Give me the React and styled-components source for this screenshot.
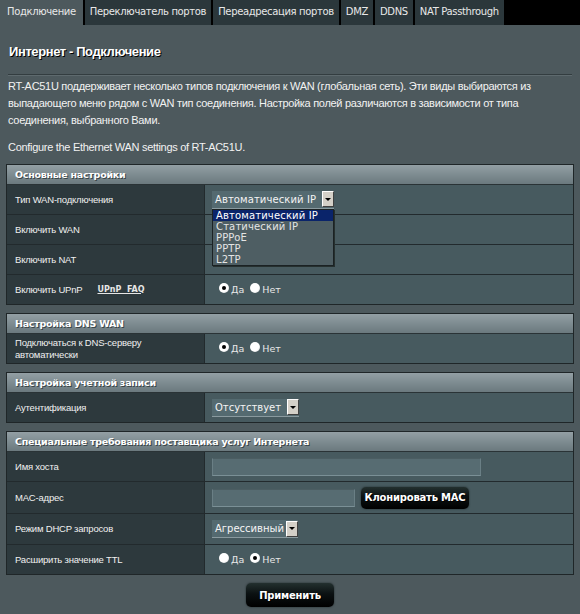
import React from "react";
import styled, { createGlobalStyle } from "styled-components";

const GlobalStyle = createGlobalStyle`
   html, body {
      margin: 0;
      padding: 0;
      background: #4d595d;
   }
   body {
      width: 580px;
      height: 614px;
      overflow: hidden;
      font-family: "Liberation Sans", Arial, sans-serif;
      color: #fff;
   }
`;

const TabBar = styled("div")`
   display: flex;
   height: 25px;
   background-color: #000;
`;

const Tab = styled("div")`
   height: 25px;
   line-height: 24px;
   padding: 0 ${props => props.$pad || 5}px;
   margin-right: 2px;
   font-family: "DejaVu Sans", Verdana, sans-serif;
   font-size: 10px;
   letter-spacing: -0.35px;
   color: #e8e8e8;
   background-color: ${props => (props.$active ? "#4d595d" : "#2b373b")};
   white-space: nowrap;
`;

const Page = styled("div")`
   display: flex;
   flex-direction: column;
   padding: 0 6px 0 6px;
`;

const Title = styled("div")`
   margin-top: 19px;
   padding-left: 3px;
   font-size: 13px;
   font-weight: bold;
   letter-spacing: -0.4px;
   color: #fff;
   text-shadow: 1px 1px 0 #000;
`;

const Divider = styled("div")`
   margin: 15px 2px 0 2px;
   height: 1px;
   background-color: #333d40;
   border-bottom: 1px solid #5e6a6e;
`;

const Text = styled("p")`
   margin: ${props => props.$mt || 8}px 0 0 2px;
   font-size: 11px;
   line-height: 17px;
   letter-spacing: -0.3px;
   color: #f2f2f2;
`;

const Table = styled("div")`
   margin-top: ${props => props.$mt || 8}px;
   border: 1px solid #1f2628;
   display: flex;
   flex-direction: column;
`;

const Header = styled("div")`
   height: 19px;
   line-height: 19px;
   padding-left: 8px;
   font-family: "DejaVu Sans", Verdana, sans-serif;
   font-size: 9.5px;
   font-weight: bold;
   letter-spacing: -0.25px;
   color: #fff;
   text-shadow: 1px 1px 0 #3a4548;
   background: linear-gradient(to bottom, #939fa4 0%, #7e8c91 50%, #6b797e 100%);
   border-bottom: 1px solid #2a3336;
`;

const Row = styled("div")`
   display: grid;
   grid-template-columns: 198px 1fr;
   height: ${props => props.$h || 29}px;
   border-top: ${props => (props.$first ? "none" : "1px solid #222a2d")};
`;

const Label = styled("div")`
   display: flex;
   align-items: center;
   gap: 15px;
   padding-left: 8px;
   font-size: 9.5px;
   letter-spacing: -0.2px;
   line-height: 12px;
   color: #f0f0f0;
   background-color: #2d393d;
   border-right: 1px solid #222a2d;
`;

const Value = styled("div")`
   position: relative;
   display: flex;
   align-items: center;
   gap: 6px;
   padding-left: 7px;
   background-color: #475a5f;
`;

const HelpLink = styled("span")`
   font-family: "DejaVu Sans", Verdana, sans-serif;
   font-size: 8px;
   font-weight: bold;
   letter-spacing: 0;
   text-decoration: underline;
   color: #e6e6e6;
`;

const SelectBox = styled("div")`
   display: flex;
   align-items: center;
   height: 18px;
   width: ${props => props.$w}px;
   box-sizing: border-box;
   padding-left: 3px;
   background-color: #546a70;
   border-bottom: 1px solid #8a9a9f;
   font-family: "DejaVu Sans", Verdana, sans-serif;
   font-size: 10px;
   color: #f4f4f4;
   white-space: nowrap;
`;

const SelectText = styled("span")`
   flex: 1;
   letter-spacing: ${props => props.$ls || 0}px;
`;

const ArrowBtn = styled("span")`
   display: flex;
   align-items: center;
   justify-content: center;
   width: 12px;
   height: 16px;
   box-sizing: border-box;
   background-color: #d4d0c8;
   border: 1px solid;
   border-color: #fff #404040 #404040 #fff;
`;

const Arrow = styled("span")`
   width: 0;
   height: 0;
   border-left: 3px solid transparent;
   border-right: 3px solid transparent;
   border-top: 3px solid #000;
`;

const DropList = styled("div")`
   position: absolute;
   left: 7px;
   top: 24px;
   width: 122px;
   box-sizing: border-box;
   background-color: #4e5e63;
   border: 1px solid #1b2224;
   box-shadow: 1px 1px 0 #26302f;
   z-index: 5;
`;

const DropItem = styled("div")`
   height: 11px;
   line-height: 11px;
   padding-left: 3px;
   font-family: "DejaVu Sans", Verdana, sans-serif;
   font-size: 10px;
   letter-spacing: 0.15px;
   color: ${props => (props.$active ? "#fff" : "#e4e4e4")};
   background-color: ${props => (props.$active ? "#0a246a" : "transparent")};
   white-space: nowrap;
`;

const RadioGroup = styled("div")`
   display: flex;
   align-items: center;
   gap: 6px;
   padding-left: 7px;
   font-family: "DejaVu Sans", Verdana, sans-serif;
   font-size: 9.5px;
   color: #e8e8e8;
`;

const RadioItem = styled("label")`
   display: flex;
   align-items: flex-end;
   gap: 2px;
`;

const RadioDot = styled("span")`
   display: inline-block;
   width: 10px;
   height: 10px;
   box-sizing: border-box;
   border-radius: 50%;
   background: radial-gradient(circle at 40% 40%, #fff 0%, #fff 55%, #cfcfcf 100%);
   position: relative;
   top: -2px;

   &::after {
      content: "";
      display: ${props => (props.$on ? "block" : "none")};
      position: absolute;
      left: 3px;
      top: 3px;
      width: 4px;
      height: 4px;
      border-radius: 50%;
      background-color: #000;
   }
`;

const Input = styled("div")`
   width: ${props => props.$w}px;
   height: 18px;
   box-sizing: border-box;
   background-color: #576c72;
   border: 1px solid;
   border-color: #4b5d62 #6a7f85 #7b9096 #6a7f85;
`;

const DarkButton = styled("div")`
   display: flex;
   align-items: center;
   justify-content: center;
   width: ${props => props.$w}px;
   height: ${props => props.$h}px;
   border-radius: 5px;
   background: linear-gradient(to bottom, #23302f 0%, #0b1112 45%, #000 100%);
   box-shadow: 0 0 2px #1e2628;
   font-family: "DejaVu Sans", Verdana, sans-serif;
   font-size: 10px;
   font-weight: bold;
   letter-spacing: -0.2px;
   color: #fff;
   text-shadow: 1px 1px 0 #000;
`;

const Footer = styled("div")`
   display: flex;
   justify-content: center;
   margin-top: 8px;
`;

const Radio = ({ yes }) => (
   <RadioGroup>
      <RadioItem>
         <RadioDot $on={yes} />
         Да
      </RadioItem>
      <RadioItem>
         <RadioDot $on={!yes} />
         Нет
      </RadioItem>
   </RadioGroup>
);

const Select = ({ text, w, ls }) => (
   <SelectBox $w={w}>
      <SelectText $ls={ls}>{text}</SelectText>
      <ArrowBtn>
         <Arrow />
      </ArrowBtn>
   </SelectBox>
);

const tabs = [
   "Подключение",
   "Переключатель портов",
   "Переадресация портов",
   "DMZ",
   "DDNS",
   "NAT Passthrough"
];

const wanTypes = ["Автоматический IP", "Статический IP", "PPPoE", "PPTP", "L2TP"];

const App = () => {
   return (
      <>
         <GlobalStyle />
         <TabBar>
            {tabs.map((t, i) => (
               <Tab key={t} $active={i === 0} $pad={i === 0 ? 7 : 5}>
                  {t}
               </Tab>
            ))}
         </TabBar>
         <Page>
            <Title>Интернет - Подключение</Title>
            <Divider />
            <Text $mt={2}>
               RT-AC51U поддерживает несколько типов подключения к WAN (глобальная сеть). Эти виды выбираются из
               выпадающего меню рядом с WAN тип соединения. Настройка полей различаются в зависимости от типа
               соединения, выбранного Вами.
            </Text>
            <Text $mt={10}>Configure the Ethernet WAN settings of RT-AC51U.</Text>

            <Table $mt={8}>
               <Header>Основные настройки</Header>
               <Row $first>
                  <Label>Тип WAN-подключения</Label>
                  <Value>
                     <Select text="Автоматический IP" w={122} ls={0.1} />
                     <DropList>
                        {wanTypes.map((w, i) => (
                           <DropItem key={w} $active={i === 0}>
                              {w}
                           </DropItem>
                        ))}
                     </DropList>
                  </Value>
               </Row>
               <Row>
                  <Label>Включить WAN</Label>
                  <Value />
               </Row>
               <Row>
                  <Label>Включить NAT</Label>
                  <Value />
               </Row>
               <Row>
                  <Label>
                     Включить UPnP
                     <HelpLink>UPnP&nbsp;&nbsp;FAQ</HelpLink>
                  </Label>
                  <Value>
                     <Radio yes />
                  </Value>
               </Row>
            </Table>

            <Table>
               <Header>Настройка DNS WAN</Header>
               <Row $first>
                  <Label>
                     Подключаться к DNS-серверу
                     <br />
                     автоматически
                  </Label>
                  <Value>
                     <Radio yes />
                  </Value>
               </Row>
            </Table>

            <Table>
               <Header>Настройка учетной записи</Header>
               <Row $first>
                  <Label>Аутентификация</Label>
                  <Value>
                     <Select text="Отсутствует" w={87} />
                  </Value>
               </Row>
            </Table>

            <Table>
               <Header>Специальные требования поставщика услуг Интернета</Header>
               <Row $first>
                  <Label>Имя хоста</Label>
                  <Value>
                     <Input $w={269} />
                  </Value>
               </Row>
               <Row $h={31}>
                  <Label>MAC-адрес</Label>
                  <Value>
                     <Input $w={143} />
                     <DarkButton $w={108} $h={22}>
                        Клонировать MAC
                     </DarkButton>
                  </Value>
               </Row>
               <Row $h={30}>
                  <Label>Режим DHCP запросов</Label>
                  <Value>
                     <Select text="Агрессивный" w={86} />
                  </Value>
               </Row>
               <Row>
                  <Label>Расширить значение TTL</Label>
                  <Value>
                     <Radio yes={false} />
                  </Value>
               </Row>
            </Table>

            <Footer>
               <DarkButton $w={88} $h={24}>
                  Применить
               </DarkButton>
            </Footer>
         </Page>
      </>
   );
};

export default App;
